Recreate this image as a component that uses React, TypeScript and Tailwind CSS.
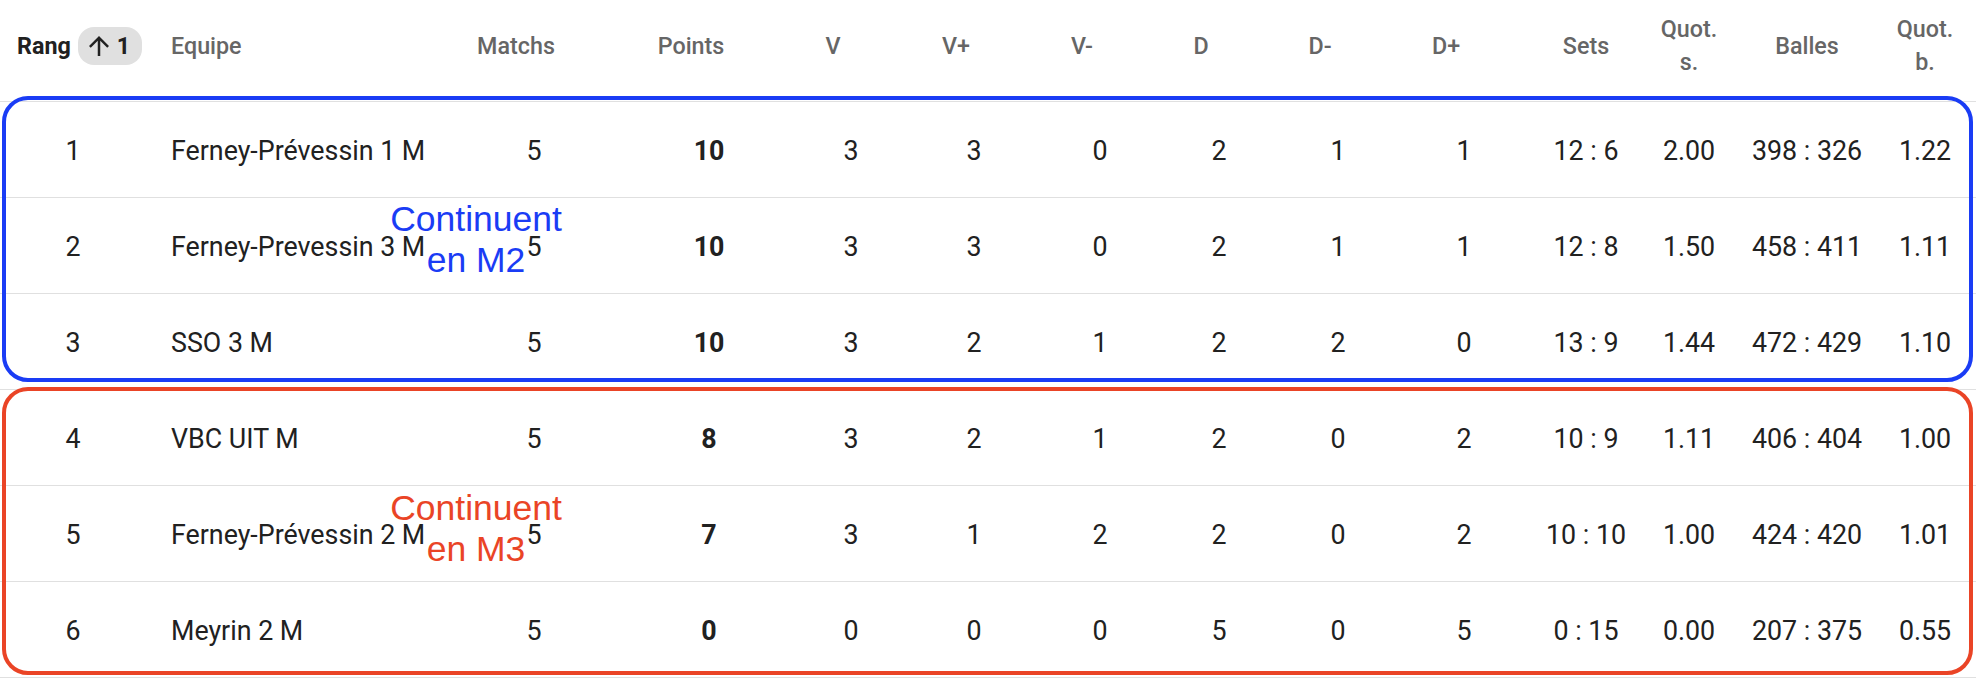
import { ReactNode } from "react"

type Team = {
    rank: number
    name: string
    matchs: number
    points: number
    v: number
    vPlus: number
    vMinus: number
    d: number
    dMinus: number
    dPlus: number
    sets: string
    quotS: string
    balles: string
    quotB: string
}

const teams: Team[] = [
    { rank: 1, name: 'Ferney-Prévessin 1 M', matchs: 5, points: 10, v: 3, vPlus: 3, vMinus: 0, d: 2, dMinus: 1, dPlus: 1, sets: '12 : 6', quotS: '2.00', balles: '398 : 326', quotB: '1.22' },
    { rank: 2, name: 'Ferney-Prevessin 3 M', matchs: 5, points: 10, v: 3, vPlus: 3, vMinus: 0, d: 2, dMinus: 1, dPlus: 1, sets: '12 : 8', quotS: '1.50', balles: '458 : 411', quotB: '1.11' },
    { rank: 3, name: 'SSO 3 M', matchs: 5, points: 10, v: 3, vPlus: 2, vMinus: 1, d: 2, dMinus: 2, dPlus: 0, sets: '13 : 9', quotS: '1.44', balles: '472 : 429', quotB: '1.10' },
    { rank: 4, name: 'VBC UIT M', matchs: 5, points: 8, v: 3, vPlus: 2, vMinus: 1, d: 2, dMinus: 0, dPlus: 2, sets: '10 : 9', quotS: '1.11', balles: '406 : 404', quotB: '1.00' },
    { rank: 5, name: 'Ferney-Prévessin 2 M', matchs: 5, points: 7, v: 3, vPlus: 1, vMinus: 2, d: 2, dMinus: 0, dPlus: 2, sets: '10 : 10', quotS: '1.00', balles: '424 : 420', quotB: '1.01' },
    { rank: 6, name: 'Meyrin 2 M', matchs: 5, points: 0, v: 0, vPlus: 0, vMinus: 0, d: 5, dMinus: 0, dPlus: 5, sets: '0 : 15', quotS: '0.00', balles: '207 : 375', quotB: '0.55' },
]

// same template for header and body so the columns line up
const GRID = "grid grid-cols-[146px_324px_128px_192px_122px_124px_128px_110px_128px_124px_120px_86px_150px_86px_8px]"

function HeadCell({ children, className = '' }: { children: ReactNode, className?: string }) {
    return (
        <div className={`flex items-center h-full text-[23.3px] font-medium text-[#666666] leading-[33px] ${className}`}>
            {children}
        </div>
    )
}

function Cell({ children, className = '' }: { children: ReactNode, className?: string }) {
    return (
        <div className={`flex items-center h-full pt-[4px] text-[26.8px] text-[#212121] ${className}`}>
            {children}
        </div>
    )
}

function SortBadge() {
    return (
        <span className="inline-flex items-center h-[38px] rounded-[16px] bg-[#e0e0e0] pl-[6px] pr-[12px] gap-[3px] text-[#212121]">
            <svg width="30" height="30" viewBox="0 0 24 24" fill="currentColor">
                <path d="M4 12l1.41 1.41L11 7.83V20h2V7.83l5.58 5.59L20 12l-8-8-8 8z" />
            </svg>
            <span className="font-bold">1</span>
        </span>
    )
}

export default function App() {
    return (
        <div className="relative w-[1976px] h-[678px] bg-white overflow-hidden font-['Roboto',sans-serif]">
            {/* header */}
            <div className={`${GRID} h-[102px] pb-[9px] border-b border-[#e0e0e0]`}>
                <HeadCell className="pl-[17px] gap-[7px]">
                    <span className="font-bold text-[#212121]">Rang</span>
                    <SortBadge />
                </HeadCell>
                <HeadCell className="pl-[25px]">Equipe</HeadCell>
                <HeadCell className="justify-center pr-[36px]">Matchs</HeadCell>
                <HeadCell className="justify-center pl-[30px] pr-[36px]">Points</HeadCell>
                <HeadCell className="justify-center pr-[36px]">V</HeadCell>
                <HeadCell className="justify-center pr-[36px]">V+</HeadCell>
                <HeadCell className="justify-center pr-[36px]">V-</HeadCell>
                <HeadCell className="justify-center pr-[36px]">D</HeadCell>
                <HeadCell className="justify-center pr-[36px]">D-</HeadCell>
                <HeadCell className="justify-center pr-[36px]">D+</HeadCell>
                <HeadCell className="justify-center">Sets</HeadCell>
                <HeadCell className="justify-center text-center">Quot.<br />s.</HeadCell>
                <HeadCell className="justify-center">Balles</HeadCell>
                <HeadCell className="justify-center text-center">Quot.<br />b.</HeadCell>
                <div />
            </div>

            {/* rows */}
            {teams.map((team) => (
                <div key={team.rank} className={`${GRID} h-[96px] border-b border-[#e0e0e0]`}>
                    <Cell className="justify-center">{team.rank}</Cell>
                    <Cell className="pl-[25px] whitespace-nowrap">{team.name}</Cell>
                    <Cell className="justify-center">{team.matchs}</Cell>
                    <Cell className="justify-center pl-[30px] font-bold">{team.points}</Cell>
                    <Cell className="justify-center">{team.v}</Cell>
                    <Cell className="justify-center">{team.vPlus}</Cell>
                    <Cell className="justify-center">{team.vMinus}</Cell>
                    <Cell className="justify-center">{team.d}</Cell>
                    <Cell className="justify-center">{team.dMinus}</Cell>
                    <Cell className="justify-center">{team.dPlus}</Cell>
                    <Cell className="justify-center whitespace-nowrap">{team.sets}</Cell>
                    <Cell className="justify-center">{team.quotS}</Cell>
                    <Cell className="justify-center whitespace-nowrap">{team.balles}</Cell>
                    <Cell className="justify-center">{team.quotB}</Cell>
                    <div />
                </div>
            ))}

            {/* annotations drawn over the table */}
            <div className="absolute left-[2px] top-[96px] w-[1971px] h-[286px] border-4 border-[#1a3cf5] rounded-[26px] pointer-events-none" />
            <div className="absolute left-[2px] top-[387px] w-[1971px] h-[288px] border-4 border-[#ea4426] rounded-[26px] pointer-events-none" />

            <div className="absolute left-[376px] top-[199px] w-[200px] text-center text-[35.5px] leading-[41px] text-[#1a3cf5] font-['Liberation_Sans',Arial,sans-serif]">
                Continuent<br />en M2
            </div>
            <div className="absolute left-[376px] top-[488px] w-[200px] text-center text-[35.5px] leading-[41px] text-[#ea4426] font-['Liberation_Sans',Arial,sans-serif]">
                Continuent<br />en M3
            </div>
        </div>
    )
}
